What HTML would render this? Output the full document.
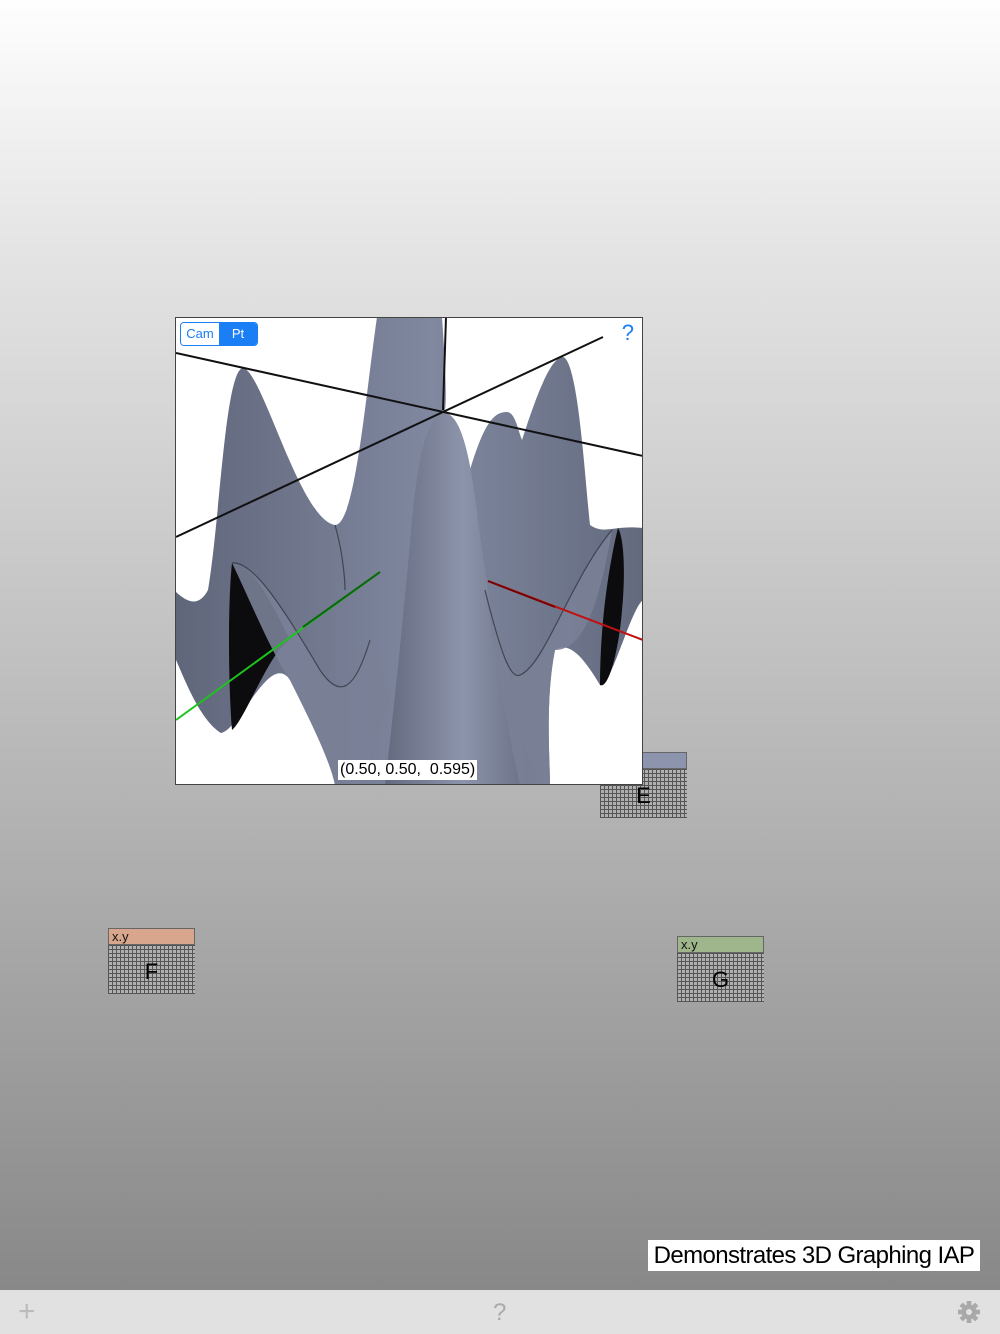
<!DOCTYPE html>
<html><head><style>
body{margin:0;width:1000px;height:1334px;position:relative;overflow:hidden;font-family:"Liberation Sans",sans-serif;background:linear-gradient(#fefefe 0px,#e4e4e4 250px,#b4b4b4 800px,#888 1290px);}
.node{position:absolute;width:87px;}
.hd{height:17px;border:1px solid #666;box-sizing:border-box;font-size:13px;line-height:16px;padding-left:3px;color:#111;}
.gr{height:49px;background-color:#b0b0b0;background-image:repeating-linear-gradient(90deg,#555 0 1px,transparent 1px 4px),repeating-linear-gradient(0deg,#555 0 1px,transparent 1px 4px);text-align:center;font-size:22px;line-height:54px;color:#000;}
.bar{position:absolute;left:0;top:1290px;width:1000px;height:44px;background:#e1e1e1;}
</style></head><body>
<div class="node" style="left:600px;top:752px"><div class="hd" style="background:#8d95ae"></div><div class="gr">E</div></div>
<div class="node" style="left:108px;top:928px"><div class="hd" style="background:#d8a68c">x.y</div><div class="gr">F</div></div>
<div class="node" style="left:677px;top:936px"><div class="hd" style="background:#9fb58c">x.y</div><div class="gr">G</div></div>

<div style="position:absolute;left:175px;top:317px;width:468px;height:468px;background:#fff;border:1px solid #444;box-sizing:border-box;overflow:hidden">
<svg width="468" height="468" viewBox="175 317 468 468" style="position:absolute;left:-1px;top:-1px">
<defs>
<linearGradient id="g1" x1="0" x2="1"><stop offset="0" stop-color="#646a7e"/><stop offset=".5" stop-color="#8c94ab"/><stop offset="1" stop-color="#646a7e"/></linearGradient>
<linearGradient id="g2" x1="0" x2="1"><stop offset="0" stop-color="#60667a"/><stop offset=".55" stop-color="#8088a0"/><stop offset="1" stop-color="#636a7e"/></linearGradient>
</defs>
<path fill="url(#g2)" d="M176,592 C190,605 200,605 208,590 C220,520 225,370 243,368 C262,370 300,520 335,525 C355,525 365,400 377,317 L442,317 C445,360 447,400 445,410 L470,470 C485,420 495,412 507,412 C515,412 518,430 522,440 C535,400 550,357 563,357 C578,360 585,480 590,525 C605,535 612,525 643,528 L643,600 C630,610 610,690 600,685 C585,660 570,640 555,650 C545,700 550,760 550,785 L335,785 C330,760 310,720 290,680 C270,650 240,730 221,733 C200,720 185,680 176,660 Z"/>
<path fill="#0c0c0e" d="M232,563 C250,560 270,600 290,640 C270,650 245,720 232,730 C228,680 228,600 232,563 Z"/>
<path fill="#0c0c0e" d="M618,528 C610,560 600,620 600,685 C610,690 620,640 622,610 C625,580 625,540 618,528 Z"/>
<path fill="#111" d="M455,785 C455,770 470,765 480,770 C485,775 488,780 490,785 Z"/>
<path fill="url(#g1)" d="M385,785 C395,700 405,600 412,520 C420,440 430,415 445,413 C460,415 470,450 478,520 C488,600 505,700 540,785 Z"/>
<path fill="#7a8197" d="M232,563 C255,560 290,620 320,670 C340,700 355,690 370,640 L390,700 L360,785 L335,785 C330,760 310,720 290,680 C270,650 250,600 232,563 Z" opacity=".9"/>
<path fill="#7a8197" d="M485,590 C500,650 510,680 520,675 C545,665 570,580 612,530 C600,600 585,650 555,650 C545,700 550,760 550,785 L520,785 C505,720 495,650 485,590 Z" opacity=".9"/>
<g fill="none" stroke="#2b2e38" stroke-width="1.2" opacity=".7">
<path d="M232,563 C255,560 290,620 320,670 C340,700 355,690 370,640"/>
<path d="M485,590 C500,650 510,680 520,675 C545,665 570,580 612,530"/>
<path d="M335,525 C345,560 345,590 345,590"/>
</g>
<line x1="176" y1="353" x2="643" y2="456" stroke="#111" stroke-width="2"/>
<line x1="176" y1="537" x2="603" y2="337" stroke="#111" stroke-width="2"/>
<line x1="446" y1="317" x2="443" y2="410" stroke="#111" stroke-width="2"/>
<line x1="176" y1="720" x2="380" y2="572" stroke="#1cc41c" stroke-width="2"/>
<line x1="303" y1="627" x2="380" y2="572" stroke="#0a6a0a" stroke-width="2"/>
<line x1="488" y1="581" x2="643" y2="640" stroke="#c01010" stroke-width="2"/>
<line x1="488" y1="581" x2="555" y2="607" stroke="#700" stroke-width="2"/>
</svg>
<div style="position:absolute;left:4px;top:4px;width:78px;height:24px;border:1px solid #1a7ef5;border-radius:4px;box-sizing:border-box;display:flex;font-size:13px;line-height:22px;overflow:hidden">
<div style="width:38px;text-align:center;color:#1a7ef5;background:#fff">Cam</div><div style="flex:1;text-align:center;color:#fff;background:#1a7ef5">Pt</div></div>
<div style="position:absolute;right:8px;top:2px;color:#1a7ef5;font-size:22px">?</div>
<div style="position:absolute;left:162px;top:442px;background:#fff;font-size:16px;line-height:20px;padding:0 2px;color:#000">(0.50, 0.50,&nbsp; 0.595)</div>
</div>

<div style="position:absolute;left:648px;top:1240px;width:332px;height:31px;background:#fff;font-size:24px;line-height:31px;text-align:center;color:#000;letter-spacing:-0.6px">Demonstrates 3D Graphing IAP</div>
<div class="bar">
<div style="position:absolute;left:18px;top:5px;font-size:30px;color:#bbb;font-weight:200">+</div>
<div style="position:absolute;left:493px;top:9px;font-size:24px;color:#aaa">?</div>
<svg style="position:absolute;left:958px;top:11px" width="22" height="22" viewBox="-11 -11 22 22"><g fill="#a9a9a9"><circle r="7.5"/><g id="t"><rect x="-2.3" y="-11" width="4.6" height="5"/></g><use href="#t" transform="rotate(45)"/><use href="#t" transform="rotate(90)"/><use href="#t" transform="rotate(135)"/><use href="#t" transform="rotate(180)"/><use href="#t" transform="rotate(225)"/><use href="#t" transform="rotate(270)"/><use href="#t" transform="rotate(315)"/></g><circle r="3" fill="#e1e1e1"/></svg>
</div>
</body></html>
